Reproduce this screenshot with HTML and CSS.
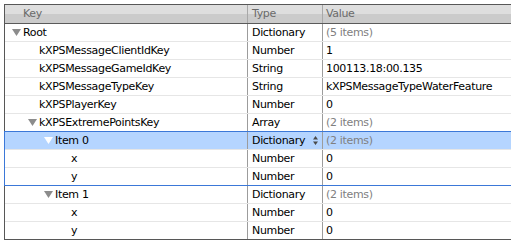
FILE: index.html
```html
<!DOCTYPE html>
<html>
<head>
<meta charset="utf-8">
<link rel="stylesheet" href="styles.css">
</head>
<body>
<div class="table">
  <div class="head">
    <div class="key hk">Key</div>
    <div class="type ht">Type</div>
    <div class="value hv">Value</div>
  </div>
  <div class="row">
    <div class="key l0"><span class="disc"><svg width="9" height="7" viewBox="0 0 9 7"><path d="M0 0H9L4.5 7Z"/></svg></span>Root</div>
    <div class="type">Dictionary</div>
    <div class="value dim">(5 items)</div>
  </div>
  <div class="row">
    <div class="key l1"><span class="disc"></span>kXPSMessageClientIdKey</div>
    <div class="type">Number</div>
    <div class="value">1</div>
  </div>
  <div class="row">
    <div class="key l1"><span class="disc"></span>kXPSMessageGameIdKey</div>
    <div class="type">String</div>
    <div class="value">100113.18:00.135</div>
  </div>
  <div class="row">
    <div class="key l1"><span class="disc"></span>kXPSMessageTypeKey</div>
    <div class="type">String</div>
    <div class="value">kXPSMessageTypeWaterFeature</div>
  </div>
  <div class="row">
    <div class="key l1"><span class="disc"></span>kXPSPlayerKey</div>
    <div class="type">Number</div>
    <div class="value">0</div>
  </div>
  <div class="row">
    <div class="key l1"><span class="disc"><svg width="9" height="7" viewBox="0 0 9 7"><path d="M0 0H9L4.5 7Z"/></svg></span>kXPSExtremePointsKey</div>
    <div class="type">Array</div>
    <div class="value dim">(2 items)</div>
  </div>
  <div class="group">
    <div class="row selected">
      <div class="key l2"><span class="disc"><svg width="9" height="7" viewBox="0 0 9 7"><path d="M0 0H9L4.5 7Z"/></svg></span>Item 0</div>
      <div class="type">Dictionary<span class="stepper"><svg width="5" height="9" viewBox="0 0 5 9"><path d="M2.5 0L5 3.5H0Z M0 5.5H5L2.5 9Z"/></svg></span></div>
      <div class="value dim">(2 items)</div>
    </div>
    <div class="row">
      <div class="key l3"><span class="disc"></span>x</div>
      <div class="type">Number</div>
      <div class="value">0</div>
    </div>
    <div class="row">
      <div class="key l3"><span class="disc"></span>y</div>
      <div class="type">Number</div>
      <div class="value">0</div>
    </div>
  </div>
  <div class="row">
    <div class="key l2"><span class="disc"><svg width="9" height="7" viewBox="0 0 9 7"><path d="M0 0H9L4.5 7Z"/></svg></span>Item 1</div>
    <div class="type">Dictionary</div>
    <div class="value dim">(2 items)</div>
  </div>
  <div class="row">
    <div class="key l3"><span class="disc"></span>x</div>
    <div class="type">Number</div>
    <div class="value">0</div>
  </div>
  <div class="row last">
    <div class="key l3"><span class="disc"></span>y</div>
    <div class="type">Number</div>
    <div class="value">0</div>
  </div>
</div>
</body>
</html>
```
FILE: styles.css
```css
html, body {
  margin: 0;
  padding: 0;
  background: #ffffff;
  overflow: hidden;
}

.table {
  margin: 4px 0 0 4px;
  border: 1px solid #575757;
  border-right: none;
  font-family: "DejaVu Sans", Verdana, sans-serif;
  font-size: 11px;
  letter-spacing: -0.33px;
  color: #000;
}

.head {
  display: flex;
  height: 18px;
  line-height: 18px;
  border-bottom: 1px solid #5a5a5a;
  background: linear-gradient(to bottom, #dedede 0, #dedede 50%, #cbcbcb 50%, #cbcbcb 100%);
  color: #6a6a6a;
}

.row {
  display: flex;
  height: 17px;
  line-height: 17px;
  border-bottom: 1px solid #e6e6e6;
  white-space: nowrap;
}

.row.last {
  border-bottom: none;
}

.key {
  width: 242px;
  border-right: 1px solid #9c9c9c;
  display: flex;
  align-items: center;
}

.type {
  width: 70px;
  padding-left: 4px;
  border-right: 1px solid #9c9c9c;
  display: flex;
  align-items: center;
}

.value {
  flex: 1;
  min-width: 0;
  padding-left: 3px;
  overflow: hidden;
}

.head .key, .head .type {
  border-right-color: #a8a8a8;
}

.hk { padding-left: 18px; width: 224px; }

.l0 { padding-left: 7px; width: 235px; }
.l1 { padding-left: 23px; width: 219px; }
.l2 { padding-left: 39px; width: 203px; }
.l3 { padding-left: 55px; width: 187px; }

.disc {
  width: 11px;
  flex: none;
  display: flex;
  align-items: center;
}

.disc svg {
  display: block;
  fill: #8c8c8c;
}

.dim {
  color: #808080;
}

.group {
  position: relative;
}

.group::after {
  content: "";
  position: absolute;
  top: -1px;
  left: -1px;
  right: 0;
  bottom: 0;
  border: 1px solid #3b78d8;
  border-right: none;
  pointer-events: none;
}

.selected {
  background: #b5d5ff;
}

.selected .disc svg {
  fill: #ffffff;
}

.stepper {
  margin-left: auto;
  margin-right: 4px;
  display: flex;
  align-items: center;
}

.stepper svg {
  display: block;
  fill: #4a4a4a;
}
```
